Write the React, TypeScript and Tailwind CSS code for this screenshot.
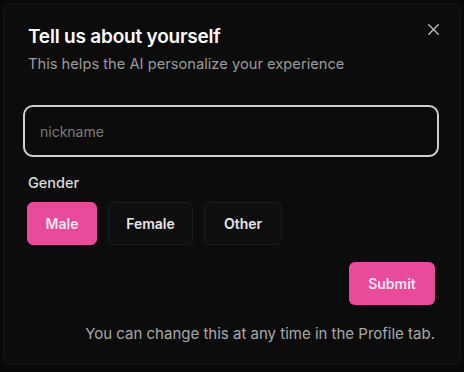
import { useState } from 'react'
import { X } from 'lucide-react'

const GENDERS = [
  { label: 'Male', w: 'w-[70px]' },
  { label: 'Female', w: 'w-[85px]' },
  { label: 'Other', w: 'w-[78px]' },
]

export default function App() {
  const [gender, setGender] = useState('Male')
  const [nickname, setNickname] = useState('')

  return (
    <div className="w-[464px] h-[372px] bg-[#080808] p-[3px] font-['Inter',sans-serif]">
      <div className="relative h-[362px] bg-[#0c0c0c] border border-[#171717] rounded-md px-6 pt-[21px]">
        <button className="absolute right-[17px] top-[16px] text-[#bdbdbd]">
          <X size={19} strokeWidth={1.75} />
        </button>
        <h2 className="text-[19px] leading-6 font-semibold text-white tracking-[-0.2px]">Tell us about yourself</h2>
        <p className="mt-[5px] text-[14.7px] leading-5 text-[#9a9a9a]">This helps the AI personalize your experience</p>

        <input
          value={nickname}
          onChange={e => setNickname(e.target.value)}
          placeholder="nickname"
          autoFocus
          className="mt-[31px] -ml-[5px] w-[416px] h-[52px] rounded-[10px] border-2 border-[#cfcfcf] bg-[#0c0c0c] px-[15px] text-[14px] text-white placeholder:text-[#7a7a7a] outline-none"
        />

        <p className="mt-[16px] text-[14.5px] leading-5 text-[#dcdcdc] font-medium">Gender</p>
        <div className="mt-[9px] -ml-px flex gap-[11px]">
          {GENDERS.map(g => (
            <button
              key={g.label}
              onClick={() => setGender(g.label)}
              className={`${g.w} h-[43px] rounded-[6px] text-[14px] font-semibold ${gender === g.label ? 'bg-[#e94a9a] text-[#fbe3f0] border border-[#e94a9a]' : 'bg-[#0e0e0e] text-[#e6e6e6] border border-[#1c1c1c]'}`}
            >
              {g.label}
            </button>
          ))}
        </div>

        <div className="mt-[17px] flex justify-end pr-[1px]">
          <button className="h-[43px] w-[86px] rounded-[6px] bg-[#e94a9a] text-[14px] font-semibold text-[#fbe3f0]">Submit</button>
        </div>
        <p className="mt-[19px] text-right pr-[1px] text-[15px] leading-5 text-[#a8a8a8]">You can change this at any time in the Profile tab.</p>
      </div>
    </div>
  )
}
